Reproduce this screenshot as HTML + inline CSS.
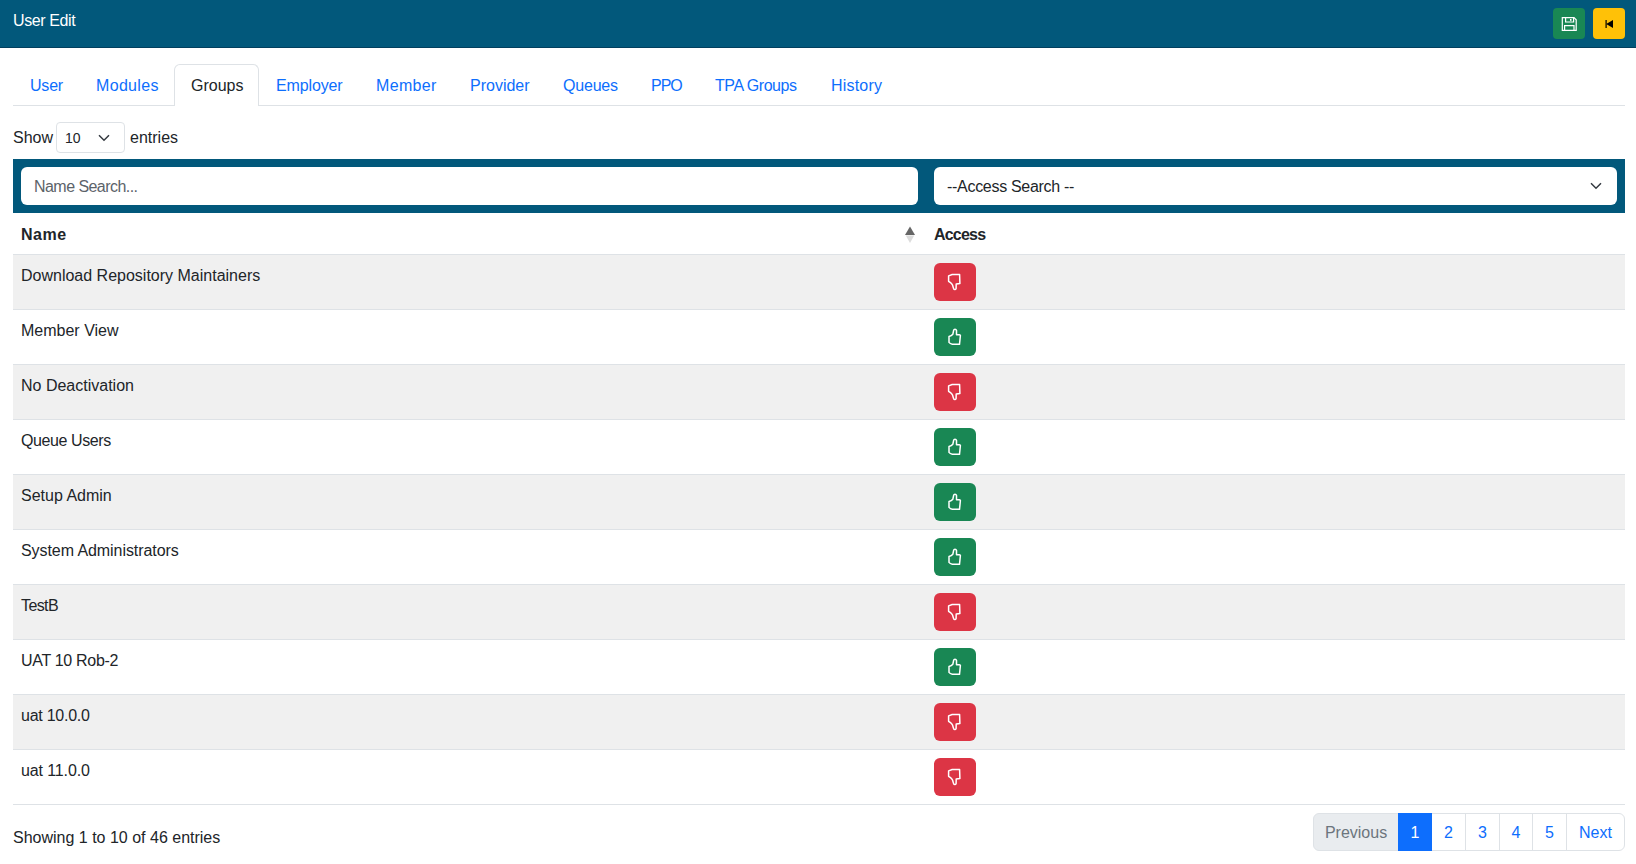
<!DOCTYPE html>
<html><head><meta charset="utf-8">
<style>
*{box-sizing:border-box;margin:0;padding:0}
html,body{width:1636px;height:864px;overflow:hidden;background:#fff}
body{font-family:"Liberation Sans",sans-serif;font-size:16px;line-height:24px;color:#212529;position:relative}
.abs{position:absolute}
#hdr{left:0;top:0;width:1636px;height:47px;background:#02587b;border-bottom:0}
#hdrline{left:0;top:47px;width:1636px;height:1px;background:#023f5e}
#title{left:13px;top:9px;color:#fff;white-space:nowrap;letter-spacing:-0.4px}
.hbtn{top:8px;width:32px;height:31px;border-radius:4px}
#save{left:1553px;background:#198754}
#back{left:1593px;background:#ffc107}
#tabline{left:13px;top:105px;width:1612px;height:1px;background:#dee2e6}
.tab{top:74px;color:#0d6efd;white-space:nowrap}
#acttab{left:174px;top:64px;width:85px;height:42px;border:1px solid #dee2e6;border-bottom:0;border-radius:6px 6px 0 0;background:#fff}
.t{white-space:nowrap}
#sel10{left:56px;top:122px;width:69px;height:31px;border:1px solid #dee2e6;border-radius:4px;background:#fff}
#band{left:13px;top:159px;width:1612px;height:54px;background:#02587b}
.inp{top:167px;height:38px;background:#fff;border-radius:6px}
#nameinp{left:21px;width:897px}
#accinp{left:934px;width:683px}
.row{left:13px;width:1612px;height:55px;border-bottom:1px solid #dee2e6}
.odd{background:#f0f0f0}
.btn{left:934px;width:42px;height:38px;border-radius:6px}
.red{background:#dc3545}
.green{background:#198754}
.pg{top:813px;height:38px;border:1px solid #dee2e6;color:#0d6efd;text-align:center}
</style></head><body>
<div id="hdr" class="abs"></div>
<div id="hdrline" class="abs"></div>
<div id="title" class="abs">User Edit</div>
<div id="save" class="abs hbtn">
<svg class="abs" style="left:8px;top:9px" width="17" height="15" viewBox="0 0 17 15"><path d="M1.3 0.6H13L15.2 2.8V13.3H1.3Z" fill="none" stroke="#fff" stroke-width="1.2"/><path d="M4.6 0.6V5H12.6V0.6" fill="none" stroke="#fff" stroke-width="1.2"/><path d="M3.6 13.3V8.6H13V13.3" fill="none" stroke="#fff" stroke-width="1.2"/><rect x="9" y="2" width="1.5" height="1.8" fill="#fff"/></svg>
</div>
<div id="back" class="abs hbtn">
<svg class="abs" style="left:12px;top:12px" width="9" height="9" viewBox="0 0 9 9"><rect x="0.5" y="0" width="1.2" height="8" fill="#000"/><path d="M1.2 4L8 0v8z" fill="#000"/></svg>
</div>

<div id="tabline" class="abs"></div>
<div id="acttab" class="abs"></div>
<div class="abs tab" style="left:30px;letter-spacing:-0.2px">User</div>
<div class="abs tab" style="left:96px;letter-spacing:0.33px">Modules</div>
<div class="abs tab" style="left:191px;color:#212529">Groups</div>
<div class="abs tab" style="left:276px;letter-spacing:-0.14px">Employer</div>
<div class="abs tab" style="left:376px;letter-spacing:0.35px">Member</div>
<div class="abs tab" style="left:470px">Provider</div>
<div class="abs tab" style="left:563px;letter-spacing:-0.2px">Queues</div>
<div class="abs tab" style="left:651px;letter-spacing:-1px">PPO</div>
<div class="abs tab" style="left:715px;letter-spacing:-0.44px">TPA Groups</div>
<div class="abs tab" style="left:831px;letter-spacing:0.2px">History</div>

<div class="abs t" style="left:13px;top:126px">Show</div>
<div id="sel10" class="abs">
<div class="abs t" style="left:8px;top:5px;font-size:14px;line-height:21px">10</div>
<svg class="abs" style="left:41px;top:11px" width="12" height="8" viewBox="0 0 12 8"><path d="M1 1.2l5 5 5-5" fill="none" stroke="#343a40" stroke-width="1.5"/></svg>
</div>
<div class="abs t" style="left:130px;top:126px">entries</div>

<div id="band" class="abs"></div>
<div id="nameinp" class="abs inp"><div class="abs t" style="left:13px;top:8px;color:#5c636a;letter-spacing:-0.55px">Name Search...</div></div>
<div id="accinp" class="abs inp"><div class="abs t" style="left:13px;top:8px;letter-spacing:-0.3px">--Access Search --</div>
<svg class="abs" style="left:656px;top:15px" width="12" height="8" viewBox="0 0 12 8"><path d="M1 1.2l5 5 5-5" fill="none" stroke="#343a40" stroke-width="1.5"/></svg>
</div>

<div class="abs" style="left:13px;top:213px;width:1612px;height:42px;border-bottom:1px solid #dee2e6"></div>
<div class="abs t" style="left:21px;top:223px;font-weight:bold;letter-spacing:0.5px">Name</div>
<div class="abs t" style="left:934px;top:223px;font-weight:bold;letter-spacing:-0.8px">Access</div>
<svg class="abs" style="left:904px;top:226px" width="12" height="18" viewBox="0 0 12 18"><path d="M6 0.6L11 9H1z" fill="#666"/><path d="M6 17L10.2 9.6H1.8z" fill="#dcdcdc"/></svg>

<div class="abs row odd" style="top:255px"></div>
<div class="abs t" style="left:21px;top:264px">Download Repository Maintainers</div>
<div class="abs btn red" style="top:263px"><svg class="abs" style="left:0;top:0" width="42" height="38" viewBox="0 0 42 38"><path d="M14.6 12.9L18.2 11.5H25.6L25.9 20.5L22.2 20.9L22.1 25.6Q21.8 26.6 20.8 26.6Q19.9 26.6 19.6 25.6L18.5 22Q17.8 20.5 16.5 19.6L14.6 18.3Z" fill="none" stroke="#fff" stroke-width="1.5" stroke-linejoin="round"/></svg></div>
<div class="abs row" style="top:310px"></div>
<div class="abs t" style="left:21px;top:319px">Member View</div>
<div class="abs btn green" style="top:318px"><svg class="abs" style="left:0;top:0" width="42" height="38" viewBox="0 0 42 38"><path d="M21 11.2Q19.9 11.2 19.7 12.2L18.8 16.3Q17.5 18 15 18.6V24.4Q16 25.7 18.3 26.2L25.5 26.3L26.4 17.5Q26.1 16.7 25.2 16.7H22.5V12.4Q22.2 11.2 21 11.2Z" fill="none" stroke="#fff" stroke-width="1.5" stroke-linejoin="round"/></svg></div>
<div class="abs row odd" style="top:365px"></div>
<div class="abs t" style="left:21px;top:374px">No Deactivation</div>
<div class="abs btn red" style="top:373px"><svg class="abs" style="left:0;top:0" width="42" height="38" viewBox="0 0 42 38"><path d="M14.6 12.9L18.2 11.5H25.6L25.9 20.5L22.2 20.9L22.1 25.6Q21.8 26.6 20.8 26.6Q19.9 26.6 19.6 25.6L18.5 22Q17.8 20.5 16.5 19.6L14.6 18.3Z" fill="none" stroke="#fff" stroke-width="1.5" stroke-linejoin="round"/></svg></div>
<div class="abs row" style="top:420px"></div>
<div class="abs t" style="left:21px;top:429px;letter-spacing:-0.4px">Queue Users</div>
<div class="abs btn green" style="top:428px"><svg class="abs" style="left:0;top:0" width="42" height="38" viewBox="0 0 42 38"><path d="M21 11.2Q19.9 11.2 19.7 12.2L18.8 16.3Q17.5 18 15 18.6V24.4Q16 25.7 18.3 26.2L25.5 26.3L26.4 17.5Q26.1 16.7 25.2 16.7H22.5V12.4Q22.2 11.2 21 11.2Z" fill="none" stroke="#fff" stroke-width="1.5" stroke-linejoin="round"/></svg></div>
<div class="abs row odd" style="top:475px"></div>
<div class="abs t" style="left:21px;top:484px">Setup Admin</div>
<div class="abs btn green" style="top:483px"><svg class="abs" style="left:0;top:0" width="42" height="38" viewBox="0 0 42 38"><path d="M21 11.2Q19.9 11.2 19.7 12.2L18.8 16.3Q17.5 18 15 18.6V24.4Q16 25.7 18.3 26.2L25.5 26.3L26.4 17.5Q26.1 16.7 25.2 16.7H22.5V12.4Q22.2 11.2 21 11.2Z" fill="none" stroke="#fff" stroke-width="1.5" stroke-linejoin="round"/></svg></div>
<div class="abs row" style="top:530px"></div>
<div class="abs t" style="left:21px;top:539px;letter-spacing:-0.07px">System Administrators</div>
<div class="abs btn green" style="top:538px"><svg class="abs" style="left:0;top:0" width="42" height="38" viewBox="0 0 42 38"><path d="M21 11.2Q19.9 11.2 19.7 12.2L18.8 16.3Q17.5 18 15 18.6V24.4Q16 25.7 18.3 26.2L25.5 26.3L26.4 17.5Q26.1 16.7 25.2 16.7H22.5V12.4Q22.2 11.2 21 11.2Z" fill="none" stroke="#fff" stroke-width="1.5" stroke-linejoin="round"/></svg></div>
<div class="abs row odd" style="top:585px"></div>
<div class="abs t" style="left:21px;top:594px;letter-spacing:-0.6px">TestB</div>
<div class="abs btn red" style="top:593px"><svg class="abs" style="left:0;top:0" width="42" height="38" viewBox="0 0 42 38"><path d="M14.6 12.9L18.2 11.5H25.6L25.9 20.5L22.2 20.9L22.1 25.6Q21.8 26.6 20.8 26.6Q19.9 26.6 19.6 25.6L18.5 22Q17.8 20.5 16.5 19.6L14.6 18.3Z" fill="none" stroke="#fff" stroke-width="1.5" stroke-linejoin="round"/></svg></div>
<div class="abs row" style="top:640px"></div>
<div class="abs t" style="left:21px;top:649px;letter-spacing:-0.3px">UAT 10 Rob-2</div>
<div class="abs btn green" style="top:648px"><svg class="abs" style="left:0;top:0" width="42" height="38" viewBox="0 0 42 38"><path d="M21 11.2Q19.9 11.2 19.7 12.2L18.8 16.3Q17.5 18 15 18.6V24.4Q16 25.7 18.3 26.2L25.5 26.3L26.4 17.5Q26.1 16.7 25.2 16.7H22.5V12.4Q22.2 11.2 21 11.2Z" fill="none" stroke="#fff" stroke-width="1.5" stroke-linejoin="round"/></svg></div>
<div class="abs row odd" style="top:695px"></div>
<div class="abs t" style="left:21px;top:704px;letter-spacing:-0.25px">uat 10.0.0</div>
<div class="abs btn red" style="top:703px"><svg class="abs" style="left:0;top:0" width="42" height="38" viewBox="0 0 42 38"><path d="M14.6 12.9L18.2 11.5H25.6L25.9 20.5L22.2 20.9L22.1 25.6Q21.8 26.6 20.8 26.6Q19.9 26.6 19.6 25.6L18.5 22Q17.8 20.5 16.5 19.6L14.6 18.3Z" fill="none" stroke="#fff" stroke-width="1.5" stroke-linejoin="round"/></svg></div>
<div class="abs row" style="top:750px"></div>
<div class="abs t" style="left:21px;top:759px;letter-spacing:-0.12px">uat 11.0.0</div>
<div class="abs btn red" style="top:758px"><svg class="abs" style="left:0;top:0" width="42" height="38" viewBox="0 0 42 38"><path d="M14.6 12.9L18.2 11.5H25.6L25.9 20.5L22.2 20.9L22.1 25.6Q21.8 26.6 20.8 26.6Q19.9 26.6 19.6 25.6L18.5 22Q17.8 20.5 16.5 19.6L14.6 18.3Z" fill="none" stroke="#fff" stroke-width="1.5" stroke-linejoin="round"/></svg></div>

<div class="abs t" style="left:13px;top:826px">Showing 1 to 10 of 46 entries</div>
<div class="abs pg" style="left:1313px;width:86px;border-radius:6px 0 0 6px;background:#e9ecef;color:#6c757d"><span style="position:relative;top:7px">Previous</span></div>
<div class="abs pg" style="left:1431px;width:35px"><span style="position:relative;top:7px">2</span></div>
<div class="abs pg" style="left:1465px;width:35px"><span style="position:relative;top:7px">3</span></div>
<div class="abs pg" style="left:1499px;width:34px"><span style="position:relative;top:7px">4</span></div>
<div class="abs pg" style="left:1532px;width:35px"><span style="position:relative;top:7px">5</span></div>
<div class="abs pg" style="left:1566px;width:59px;border-radius:0 6px 6px 0"><span style="position:relative;top:7px">Next</span></div>
<div class="abs pg" style="left:1398px;width:34px;background:#0d6efd;border-color:#0d6efd;color:#fff"><span style="position:relative;top:7px">1</span></div>
</body></html>
